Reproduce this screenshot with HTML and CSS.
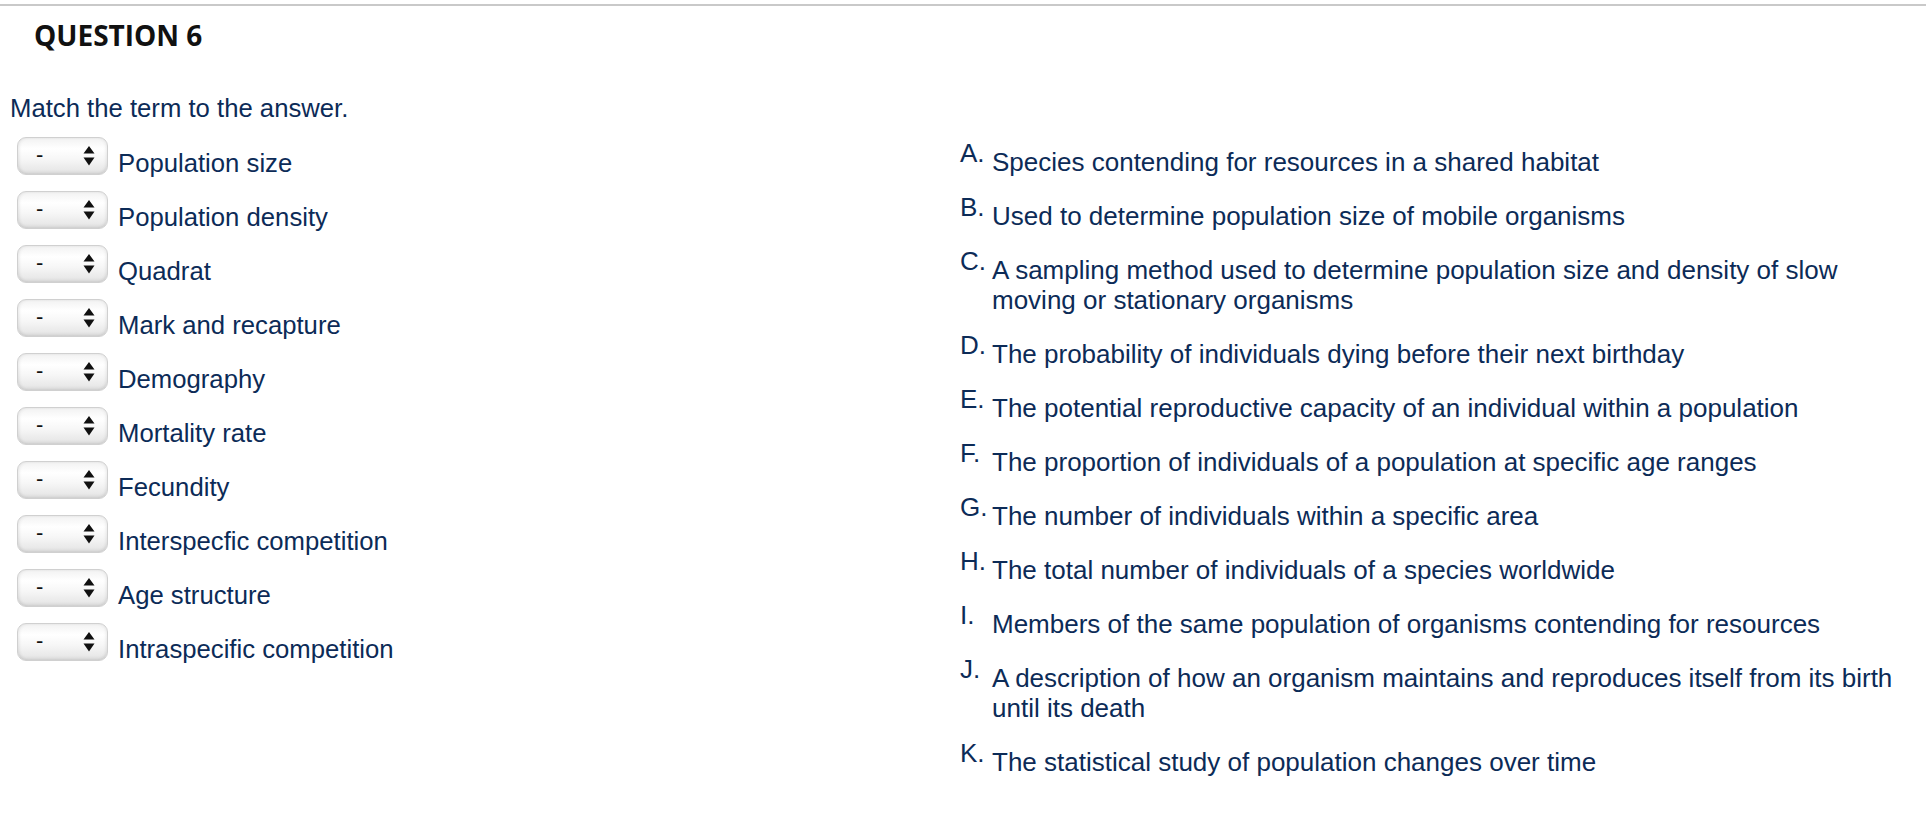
FILE: index.html
```html
<!DOCTYPE html>
<html lang="en">
<head>
<meta charset="utf-8">
<title>Question 6</title>
<link rel="stylesheet" href="styles.css">
</head>
<body>
<div class="topbar"></div>
<h2 class="qtitle">QUESTION 6</h2>
<div class="prompt">Match the term to the answer.</div>
<div class="columns">
  <div class="terms">
    <div class="row"><div class="sel"><span class="dash">-</span><svg class="arrows" width="12" height="20" viewBox="0 0 12 20"><path d="M6 0 L11.5 7.5 L0.5 7.5 Z M0.5 11.5 L11.5 11.5 L6 19.5 Z" fill="#111"/></svg></div><div class="term">Population size</div></div>
    <div class="row"><div class="sel"><span class="dash">-</span><svg class="arrows" width="12" height="20" viewBox="0 0 12 20"><path d="M6 0 L11.5 7.5 L0.5 7.5 Z M0.5 11.5 L11.5 11.5 L6 19.5 Z" fill="#111"/></svg></div><div class="term">Population density</div></div>
    <div class="row"><div class="sel"><span class="dash">-</span><svg class="arrows" width="12" height="20" viewBox="0 0 12 20"><path d="M6 0 L11.5 7.5 L0.5 7.5 Z M0.5 11.5 L11.5 11.5 L6 19.5 Z" fill="#111"/></svg></div><div class="term">Quadrat</div></div>
    <div class="row"><div class="sel"><span class="dash">-</span><svg class="arrows" width="12" height="20" viewBox="0 0 12 20"><path d="M6 0 L11.5 7.5 L0.5 7.5 Z M0.5 11.5 L11.5 11.5 L6 19.5 Z" fill="#111"/></svg></div><div class="term">Mark and recapture</div></div>
    <div class="row"><div class="sel"><span class="dash">-</span><svg class="arrows" width="12" height="20" viewBox="0 0 12 20"><path d="M6 0 L11.5 7.5 L0.5 7.5 Z M0.5 11.5 L11.5 11.5 L6 19.5 Z" fill="#111"/></svg></div><div class="term">Demography</div></div>
    <div class="row"><div class="sel"><span class="dash">-</span><svg class="arrows" width="12" height="20" viewBox="0 0 12 20"><path d="M6 0 L11.5 7.5 L0.5 7.5 Z M0.5 11.5 L11.5 11.5 L6 19.5 Z" fill="#111"/></svg></div><div class="term">Mortality rate</div></div>
    <div class="row"><div class="sel"><span class="dash">-</span><svg class="arrows" width="12" height="20" viewBox="0 0 12 20"><path d="M6 0 L11.5 7.5 L0.5 7.5 Z M0.5 11.5 L11.5 11.5 L6 19.5 Z" fill="#111"/></svg></div><div class="term">Fecundity</div></div>
    <div class="row"><div class="sel"><span class="dash">-</span><svg class="arrows" width="12" height="20" viewBox="0 0 12 20"><path d="M6 0 L11.5 7.5 L0.5 7.5 Z M0.5 11.5 L11.5 11.5 L6 19.5 Z" fill="#111"/></svg></div><div class="term">Interspecfic competition</div></div>
    <div class="row"><div class="sel"><span class="dash">-</span><svg class="arrows" width="12" height="20" viewBox="0 0 12 20"><path d="M6 0 L11.5 7.5 L0.5 7.5 Z M0.5 11.5 L11.5 11.5 L6 19.5 Z" fill="#111"/></svg></div><div class="term">Age structure</div></div>
    <div class="row"><div class="sel"><span class="dash">-</span><svg class="arrows" width="12" height="20" viewBox="0 0 12 20"><path d="M6 0 L11.5 7.5 L0.5 7.5 Z M0.5 11.5 L11.5 11.5 L6 19.5 Z" fill="#111"/></svg></div><div class="term">Intraspecific competition</div></div>
  </div>
  <div class="answers">
    <div class="ans"><span class="letter">A.</span><span class="atext">Species contending for resources in a shared habitat</span></div>
    <div class="ans"><span class="letter">B.</span><span class="atext">Used to determine population size of mobile organisms</span></div>
    <div class="ans"><span class="letter">C.</span><span class="atext">A sampling method used to determine population size and density of slow moving or stationary organisms</span></div>
    <div class="ans"><span class="letter">D.</span><span class="atext">The probability of individuals dying before their next birthday</span></div>
    <div class="ans"><span class="letter">E.</span><span class="atext">The potential reproductive capacity of an individual within a population</span></div>
    <div class="ans"><span class="letter">F.</span><span class="atext">The proportion of individuals of a population at specific age ranges</span></div>
    <div class="ans"><span class="letter">G.</span><span class="atext">The number of individuals within a specific area</span></div>
    <div class="ans"><span class="letter">H.</span><span class="atext">The total number of individuals of a species worldwide</span></div>
    <div class="ans"><span class="letter">I.</span><span class="atext">Members of the same population of organisms contending for resources</span></div>
    <div class="ans"><span class="letter">J.</span><span class="atext">A description of how an organism maintains and reproduces itself from its birth until its death</span></div>
    <div class="ans"><span class="letter">K.</span><span class="atext">The statistical study of population changes over time</span></div>
  </div>
</div>
</body>
</html>
```
FILE: styles.css
```css
html, body {
  margin: 0;
  padding: 0;
  background: #fff;
}
body {
  font-family: "Liberation Sans", Arial, Helvetica, sans-serif;
  color: #0c2b57;
  font-size: 25.7px;
  line-height: 30px;
}
.topbar {
  margin-top: 4px;
  height: 2px;
  background: #c9c9c9;
}
.qtitle {
  margin: 11px 0 0 34px;
  font-family: "Open Sans", "Noto Sans", sans-serif;
  font-weight: 700;
  font-size: 28px;
  line-height: 36px;
  color: #111;
}
.prompt {
  margin: 40px 0 0 10px;
}
.columns {
  display: flex;
  margin-top: 14px;
  padding-left: 10px;
}
.terms {
  width: 950px;
  flex: none;
}
.row {
  display: flex;
  align-items: flex-start;
  height: 38px;
  margin-bottom: 16px;
  padding-left: 7px;
}
.sel {
  width: 91px;
  height: 38px;
  box-sizing: border-box;
  border: 1px solid #d0d0d0;
  border-radius: 9px;
  background: linear-gradient(#f2f2f2 0%, #ffffff 30%, #f6f6f6 60%, #e3e3e3 100%);
  box-shadow: inset 0 -2px 3px rgba(0,0,0,0.06), inset 2px 0 3px rgba(0,0,0,0.05), inset -2px 0 3px rgba(0,0,0,0.04);
  display: flex;
  align-items: center;
  flex: none;
}
.dash {
  font-size: 22px;
  line-height: 20px;
  color: #111;
  margin-left: 18px;
  margin-top: -2px;
  width: 47px;
}
.arrows {
  display: block;
  margin-top: -1px;
}
.term {
  margin-left: 10px;
  margin-top: 11px;
  white-space: nowrap;
}
.answers {
  width: 945px;
  flex: none;
  padding-top: 10px;
  font-size: 26px;
}
.ans {
  display: flex;
  align-items: flex-start;
  margin-bottom: 24px;
}
.letter {
  width: 32px;
  flex: none;
  margin-top: -9px;
}
.atext {
  flex: 1;
}
```
